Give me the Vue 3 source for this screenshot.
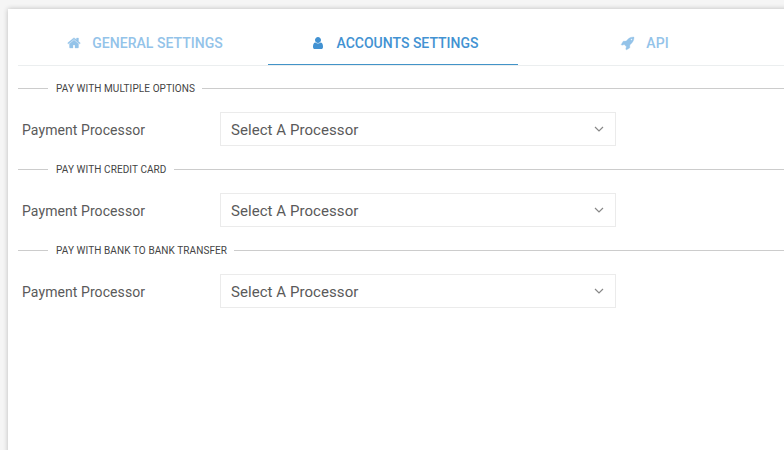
<script setup>
const tabs = [
  {
    label: 'GENERAL SETTINGS',
    name: 'general',
    path: 'M1472 992v480q0 26-19 45t-45 19h-384v-384h-256v384h-384q-26 0-45-19t-19-45v-480q0-1 .5-3t.5-3l575-474 575 474q1 2 1 6zm223-69l-62 74q-8 9-21 11h-3q-13 0-21-7l-692-577-692 577q-12 8-24 7-13-2-21-11l-62-74q-8-10-7-23.5t11-21.5l719-599q32-26 76-26t76 26l244 204v-195q0-14 9-23t23-9h192q14 0 23 9t9 23v408l219 182q10 8 11 21.5t-7 23.5z'
  },
  {
    label: 'ACCOUNTS SETTINGS',
    name: 'accounts',
    active: true,
    path: 'M1536 1399q0 109-62.5 187t-150.5 78h-854q-88 0-150.5-78t-62.5-187q0-85 8.5-160.5t31.5-152 58.5-131 94-89 134.5-34.5q131 128 313 128t313-128q76 0 134.5 34.5t94 89 58.5 131 31.5 152 8.5 160.5zm-256-887q0 159-112.5 271.5t-271.5 112.5-271.5-112.5-112.5-271.5 112.5-271.5 271.5-112.5 271.5 112.5 112.5 271.5z'
  },
  {
    label: 'API',
    name: 'api',
    path: 'M1440 448q0-40-28-68t-68-28-68 28-28 68 28 68 68 28 68-28 28-68zm224-288q0 249-75.5 430.5t-253.5 360.5q-81 80-195 176l-20 379q-2 16-16 26l-384 224q-7 4-16 4-12 0-23-9l-64-64q-13-14-8-32l85-276-281-281-276 85q-3 1-9 1-14 0-23-9l-64-64q-17-19-5-39l224-384q10-14 26-16l379-20q96-114 176-195 188-187 358-258t431-71q14 0 24 9.5t10 22.5z'
  }
]
const sections = ['PAY WITH MULTIPLE OPTIONS', 'PAY WITH CREDIT CARD', 'PAY WITH BANK TO BANK TRANSFER']
</script>

<template>
  <div class="page">
    <main class="panel">
      <nav class="tabs">
        <a v-for="tab in tabs" :key="tab.name" class="tab" :class="[tab.name, { active: tab.active }]">
          <svg class="tab-icon" viewBox="0 0 1792 1792"><path :d="tab.path" /></svg>
          <span class="tab-label">{{ tab.label }}</span>
        </a>
      </nav>
      <section v-for="title in sections" :key="title" class="group">
        <h2 class="legend"><span>{{ title }}</span></h2>
        <div class="row">
          <label class="label">Payment Processor</label>
          <div class="select">
            <span>Select A Processor</span>
            <svg class="chevron" viewBox="0 0 10 6"><path d="M1 1l4 4 4-4" /></svg>
          </div>
        </div>
      </section>
    </main>
  </div>
</template>

<style>
body {
  overflow: hidden;
}
</style>

<style scoped>
.page {
  box-sizing: border-box;
  height: 450px;
  padding: 9px 0 0 8px;
  overflow: hidden;
  background: #f5f5f5;
  font-family: Roboto, "Liberation Sans", sans-serif;
}
.panel {
  box-sizing: border-box;
  width: 790px;
  height: 460px;
  padding: 0 0 0 10px;
  background: #fff;
  box-shadow: 0 0 5px rgba(0, 0, 0, 0.24);
}
.tabs {
  box-sizing: border-box;
  display: flex;
  height: 57px;
  border-bottom: 1px solid #ebeeef;
}
.tab {
  box-sizing: border-box;
  display: flex;
  align-items: center;
  justify-content: center;
  flex: 0 0 250px;
  height: 56px;
  padding: 12px 0 0 4px;
  color: #93c3e9;
  font-size: 14px;
  font-weight: 500;
  letter-spacing: 0.03px;
  line-height: 20px;
  white-space: nowrap;
}
.tab.active {
  border-bottom: 1px solid #4293c8;
  color: #4292d2;
}
.tab.accounts {
  padding-left: 3px;
  letter-spacing: 0;
}
.tab-icon {
  width: 14px;
  height: 14px;
  margin-right: 11px;
  overflow: visible;
  fill: currentColor;
  stroke: currentColor;
  stroke-width: 40;
}
.active .tab-icon {
  margin-right: 12px;
  stroke-width: 0;
}
.group {
  height: 81px;
}
.legend {
  display: flex;
  align-items: center;
  height: 12px;
  margin: 0;
  padding-top: 16px;
  color: #444;
  font-size: 10px;
  font-weight: 400;
  letter-spacing: 0.09px;
  line-height: 12px;
  white-space: nowrap;
}
.legend span {
  padding-top: 2px;
}
.legend::before,
.legend::after {
  content: "";
  height: 1px;
  background: #ccc;
}
.legend::before {
  width: 30px;
  margin-right: 8px;
}
.legend::after {
  flex: 1;
  margin-left: 7px;
}
.row {
  display: flex;
  align-items: center;
  padding: 18px 0 0 4px;
}
.label {
  width: 198px;
  padding-top: 2px;
  color: #5a5a5a;
  font-size: 14px;
  letter-spacing: 0.08px;
}
.select {
  box-sizing: border-box;
  display: flex;
  align-items: center;
  justify-content: space-between;
  width: 396px;
  height: 34px;
  padding: 0 11px 0 10px;
  border: 1px solid #ebebeb;
  color: #5a5a5a;
  font-size: 15px;
  letter-spacing: 0.06px;
}
.select span {
  padding-top: 2px;
}
.chevron {
  width: 10px;
  height: 6px;
  fill: none;
  stroke: #888;
  stroke-width: 1.2;
}
</style>
